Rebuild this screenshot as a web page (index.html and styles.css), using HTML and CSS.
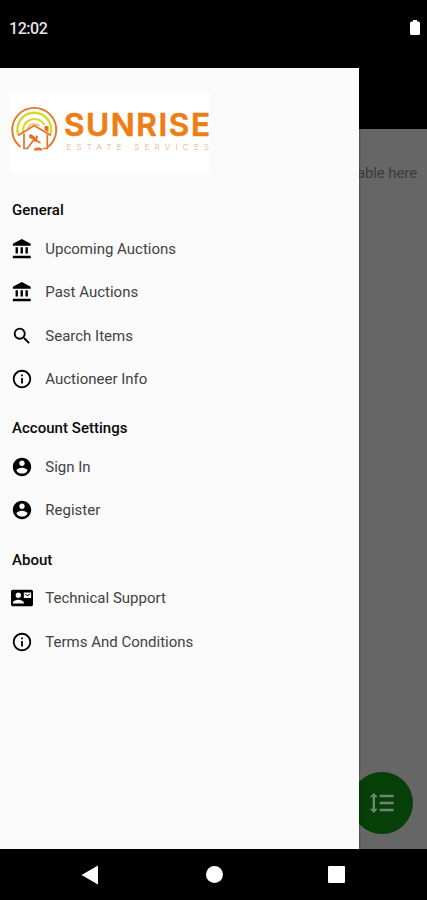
FILE: index.html
```html
<!DOCTYPE html>
<html lang="en">
<head>
<meta charset="utf-8">
<title>Sunrise Estate Services</title>
<link rel="stylesheet" href="styles.css">
</head>
<body>
<svg class="defs" aria-hidden="true">
  <symbol id="bank" viewBox="0 0 24 24"><path d="M5 10v7h2.600v-7zm5.400 0v7H13v-7zM2 22h19.500v-2.600H2zM15.800 10v7h2.600v-7zM11.800 1.200L2 6.300V8.400h19.500V6.300z"/></symbol>
  <symbol id="search" viewBox="0 0 24 24"><path d="M15.500 14h-.79l-.28-.27A6.471 6.471 0 0 0 16 9.500 6.500 6.500 0 1 0 9.500 16c1.610 0 3.090-.59 4.230-1.570l.27.28v.79l5 4.990L20.490 19l-4.990-5zm-6 0C7.010 14 5 11.990 5 9.500S7.010 5 9.500 5 14 7.010 14 9.500 11.990 14 9.500 14z"/></symbol>
  <symbol id="info" viewBox="0 0 24 24"><path d="M11 7h2v2h-2zm0 4h2v6h-2zm1-9C6.480 2 2 6.480 2 12s4.480 10 10 10 10-4.480 10-10S17.520 2 12 2zm0 18c-4.410 0-8-3.590-8-8s3.590-8 8-8 8 3.590 8 8-3.590 8-8 8z"/></symbol>
  <symbol id="account" viewBox="0 0 24 24"><path d="M12 2C6.480 2 2 6.480 2 12s4.480 10 10 10 10-4.480 10-10S17.520 2 12 2zm0 3c1.660 0 3 1.340 3 3s-1.340 3-3 3-3-1.340-3-3 1.340-3 3-3zm0 14.200c-2.500 0-4.710-1.280-6-3.220.030-1.990 4-3.080 6-3.080 1.990 0 5.970 1.090 6 3.080-1.290 1.940-3.500 3.220-6 3.220z"/></symbol>
  <symbol id="contact" viewBox="0 0 24 24"><path d="M21 8V7l-3 2-3-2v1l3 2 3-2zm1-5H2C.9 3 0 3.900 0 5v14c0 1.100.9 2 2 2h20c1.100 0 1.990-.9 1.990-2L24 5c0-1.100-.9-2-2-2zM8 6c1.660 0 3 1.340 3 3s-1.340 3-3 3-3-1.340-3-3 1.340-3 3-3zm6 12H2v-1c0-2 4-3.100 6-3.100s6 1.100 6 3.100v1zm8-6h-8V6h8v6z"/></symbol>
  <symbol id="spacing" viewBox="0 0 24 24"><path d="M6 7h2.500L5 3.500 1.500 7H4v10H1.500L5 20.500 8.500 17H6V7zm4-2v2h12V5H10zm0 14h12v-2H10v2zm0-6h12v-2H10v2z"/></symbol>
</svg>
<div class="phone">
  <header class="status">
    <span class="clock">12:02</span>
    <svg class="battery" viewBox="0 0 10 15"><path d="M3 0h4v1.500h1.500Q10 1.500 10 3v10.500Q10 15 8.500 15h-7Q0 15 0 13.500V3Q0 1.500 1.500 1.500H3z"/></svg>
  </header>
  <div class="stage">
    <aside class="drawer">
      <svg class="logo" viewBox="0 0 200 80">
        <g fill="none">
          <path d="M10.500 54A22 22 0 1 1 38 54" stroke="#ec7324" stroke-width="1.900"/>
          <path d="M8.200 41.500A16.800 16.800 0 1 1 40.300 41.500" stroke="#d3da35" stroke-width="2.500"/>
          <path d="M13 39A11.500 11.500 0 0 1 34.500 32" stroke="#dcd835" stroke-width="2.200"/>
          <path d="M17.500 35.500A7.500 7.500 0 0 1 29.500 33" stroke="#ecc060" stroke-width="1.300"/>
        </g>
        <path class="house" d="M9 42L24.300 32.500 40 42 37.300 43V55.500H14V42z"/>
        <g fill="none" stroke="#e77125" stroke-width="1.700">
          <path d="M8 42.500L24.300 32.500 40.800 42.500"/>
          <path d="M14 40.500V55.500H17.500L23.500 47M37.300 41.500V55.500H33"/>
        </g>
        <path d="M34.500 33h4v6.500l-4-2.500zM19 42l2-1 6.500 5-.7 2.800-2 .2-1.800-2.500-3.500-1.500zM26 42.500l2 .5-1 3.500 4 3-1 1.300-4.500-3.300zM24 56l2-1.500h4l2.500 1.500v1.500H24z" fill="#e77125"/>
        <text class="brand" x="54" y="43" textLength="146">SUNRISE</text>
        <text class="tagline" x="56.500" y="57" textLength="142.500">ESTATE SERVICES</text>
      </svg>
      <nav>
        <h2>General</h2>
        <a class="item"><svg><use href="#bank"/></svg><span>Upcoming Auctions</span></a>
        <a class="item"><svg><use href="#bank"/></svg><span>Past Auctions</span></a>
        <a class="item"><svg><use href="#search"/></svg><span>Search Items</span></a>
        <a class="item"><svg><use href="#info"/></svg><span>Auctioneer Info</span></a>
        <h2>Account Settings</h2>
        <a class="item"><svg><use href="#account"/></svg><span>Sign In</span></a>
        <a class="item"><svg><use href="#account"/></svg><span>Register</span></a>
        <h2>About</h2>
        <a class="item"><svg><use href="#contact"/></svg><span>Technical Support</span></a>
        <a class="item"><svg><use href="#info"/></svg><span>Terms And Conditions</span></a>
      </nav>
    </aside>
    <main class="page">
      <div class="appbar"></div>
      <p class="empty">able here</p>
      <div class="fab"><svg><use href="#spacing"/></svg></div>
    </main>
  </div>
  <footer class="navbar">
    <svg class="back" viewBox="0 0 18 20"><path d="M0.500 10L17 0.500V19.500z"/></svg>
    <span class="home"></span>
    <span class="recent"></span>
  </footer>
</div>
</body>
</html>
```
FILE: styles.css
```css
* { box-sizing: border-box; }
body { margin: 0; font-family: Roboto, "Liberation Sans", sans-serif; }
.defs { position: absolute; width: 0; height: 0; }
.phone { width: 427px; height: 900px; display: flex; flex-direction: column; background: #000; overflow: hidden; }

.status { height: 67.500px; flex: none; display: flex; justify-content: space-between; align-items: flex-start; padding: 19px 7px 0 9px; }
.clock { color: #e4e4e4; font-size: 16px; line-height: 19px; font-weight: 500; letter-spacing: -0.450px; }
.battery { width: 10px; height: 15px; margin-top: 1px; fill: #fff; }

.stage { flex: 1; display: flex; min-height: 0; }
.drawer { width: 358.500px; flex: none; background: #fafafa; padding: 25.500px 10px 0; z-index: 1; box-shadow: 0 0 2px rgba(0, 0, 0, .6); }
.logo { display: block; width: 200px; height: 80px; background: #fff; }
.house { fill: #fff; }
.brand { font-family: Inter, Roboto, sans-serif; font-size: 31.500px; font-weight: 600; fill: #ee7d13; stroke: #ee7d13; stroke-width: .6px; }
.tagline { font-family: Inter, Roboto, sans-serif; font-size: 8px; font-weight: 300; fill: #f3a878; }

nav { padding: 9.500px 2px 0; }
h2 { margin: 0; height: 44.300px; padding-top: 18.700px; font-size: 15px; line-height: 19px; font-weight: 500; color: #080808; letter-spacing: 0.030px; }
.item { height: 43.500px; display: flex; align-items: center; color: #424242; font-size: 15px; letter-spacing: 0; }
.item svg { width: 22px; height: 22px; flex: none; margin: 0 12.300px 0 -1px; fill: #000; }

.page { flex: 1; background: #666; display: flex; flex-direction: column; }
.appbar { height: 61px; background: #000; flex: none; }
.empty { margin: 34px 10px 0 -2px; text-align: right; white-space: nowrap; font-size: 15px; line-height: 20px; color: #3c3c3c; letter-spacing: -0.100px; }
.fab { width: 62px; height: 62px; border-radius: 50%; background: #063f08; margin: auto 0 15px -8px; display: flex; align-items: center; justify-content: center; }
.fab svg { width: 28px; height: 28px; fill: #70866f; }

.navbar { height: 51px; flex: none; display: flex; align-items: center; padding-left: 80.500px; }
.back { width: 18px; height: 20px; fill: #fff; }
.home { width: 17px; height: 17px; margin-left: 107px; border-radius: 50%; background: #fff; }
.recent { width: 17px; height: 17px; margin-left: 105.500px; border-radius: 1px; background: #fff; }
```
